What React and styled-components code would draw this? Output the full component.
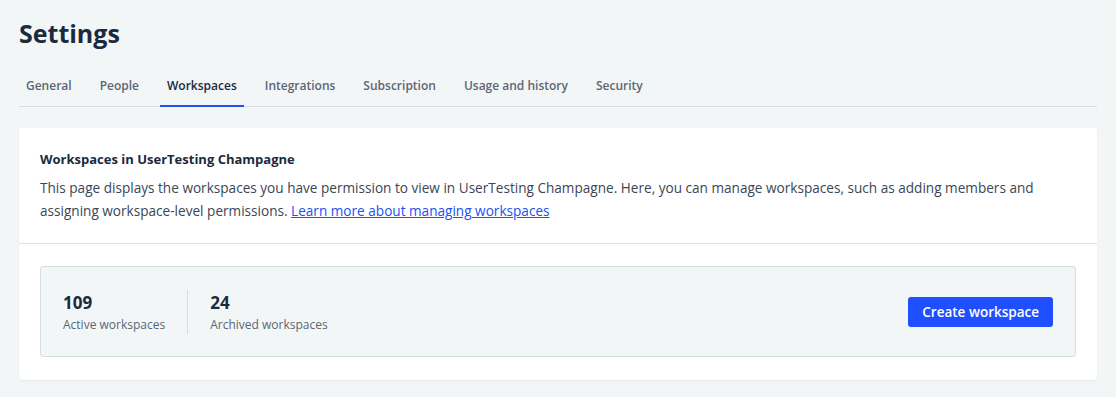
import React from "react";
import styled, { createGlobalStyle } from "styled-components";

const GlobalStyle = createGlobalStyle`
  body {
    margin: 0;
    background: #f3f6f7;
    font-family: "Open Sans", "Lato", sans-serif;
    color: #1b2a3d;
  }
`;

const Page = styled.div`
  padding: 16px 19px 18px 19px;
`;

const Title = styled.h1`
  margin: 0;
  font-size: 25px;
  line-height: 34px;
  font-weight: 700;
  color: #1b2a3d;
`;

const Tabs = styled.div`
  display: flex;
  gap: 14px;
  margin-top: 16px;
  border-bottom: 1px solid #d6dce1;
`;

const Tab = styled.div`
  padding: 0 7px;
  height: 39px;
  display: flex;
  align-items: center;
  font-size: 12px;
  font-weight: 600;
  color: ${({ active }) => (active ? "#1b2a3d" : "#5b6674")};
  border-bottom: 2px solid ${({ active }) => (active ? "#2150f5" : "transparent")};
  margin-bottom: -1px;
  cursor: pointer;
`;

const Card = styled.div`
  margin-top: 21px;
  background: #fff;
  border-radius: 3px;
  box-shadow: 0 1px 2px rgba(20, 40, 60, 0.06);
`;

const CardHeader = styled.div`
  padding: 23px 21px 21px 21px;
  border-bottom: 1px solid #dde2e6;
`;

const CardTitle = styled.div`
  font-size: 13px;
  line-height: 16px;
  font-weight: 700;
  color: #1b2a3d;
`;

const Description = styled.p`
  margin: 9px 0 0 0;
  font-size: 13.6px;
  line-height: 23px;
  color: #3a4656;
`;

const Link = styled.a`
  color: #2150f5;
  text-decoration: underline;
  cursor: pointer;
`;

const CardBody = styled.div`
  padding: 22px 21px 23px 21px;
`;

const StatsBox = styled.div`
  display: flex;
  align-items: center;
  justify-content: space-between;
  height: 89px;
  background: #f3f6f7;
  border: 1px solid #d6dce1;
  border-radius: 3px;
  padding: 0 22px 0 0;
`;

const Stats = styled.div`
  display: flex;
  align-items: center;
`;

const Stat = styled.div`
  padding: 0 22px;
  display: flex;
  flex-direction: column;
  & + & {
    border-left: 1px solid #d6dce1;
  }
`;

const StatValue = styled.div`
  font-size: 17px;
  line-height: 26px;
  font-weight: 700;
  color: #1b2a3d;
`;

const StatLabel = styled.div`
  font-size: 12px;
  line-height: 18px;
  color: #5b6674;
`;

const Button = styled.button`
  height: 30px;
  padding: 0 14px;
  border: none;
  border-radius: 3px;
  background: #1f4fff;
  color: #fff;
  font-family: inherit;
  font-size: 13.5px;
  font-weight: 600;
  cursor: pointer;
`;

const tabs = [
  "General",
  "People",
  "Workspaces",
  "Integrations",
  "Subscription",
  "Usage and history",
  "Security",
];

export default function App() {
  return (
    <>
      <GlobalStyle />
      <Page>
        <Title>Settings</Title>
        <Tabs>
          {tabs.map((t) => (
            <Tab key={t} active={t === "Workspaces"}>
              {t}
            </Tab>
          ))}
        </Tabs>
        <Card>
          <CardHeader>
            <CardTitle>Workspaces in UserTesting Champagne</CardTitle>
            <Description>
              This page displays the workspaces you have permission to view in
              UserTesting Champagne. Here, you can manage workspaces, such as
              adding members and assigning workspace-level permissions.{" "}
              <Link>Learn more about managing workspaces</Link>
            </Description>
          </CardHeader>
          <CardBody>
            <StatsBox>
              <Stats>
                <Stat>
                  <StatValue>109</StatValue>
                  <StatLabel>Active workspaces</StatLabel>
                </Stat>
                <Stat>
                  <StatValue>24</StatValue>
                  <StatLabel>Archived workspaces</StatLabel>
                </Stat>
              </Stats>
              <Button>Create workspace</Button>
            </StatsBox>
          </CardBody>
        </Card>
      </Page>
    </>
  );
}
